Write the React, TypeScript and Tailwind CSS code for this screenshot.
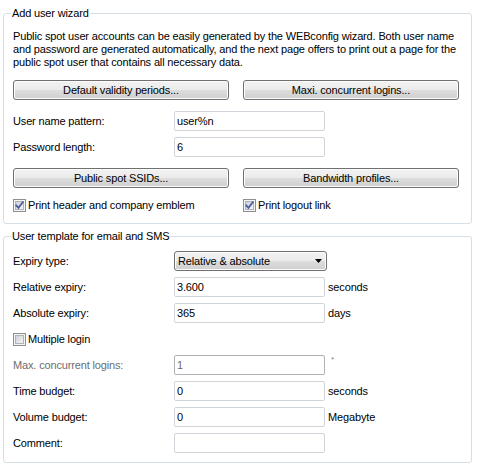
import { ReactNode } from 'react';

function PushButton({ label }: { label: string }) {
  return (
    <button
      type="button"
      className="w-[216px] h-[20px] rounded-[3px] border border-[#707070] bg-[linear-gradient(to_bottom,#f2f2f2_0%,#ebebeb_50%,#dddddd_51%,#cfcfcf_100%)] shadow-[inset_0_0_0_1px_#fcfcfc] text-center text-black leading-[18px]"
    >
      {label}
    </button>
  );
}

function CheckBox({ checked }: { checked: boolean }) {
  return (
    <svg width="13" height="13" viewBox="0 0 13 13" className="shrink-0">
      <defs>
        <linearGradient id={checked ? 'cbOn' : 'cbOff'} x1="0" y1="0" x2="1" y2="1">
          <stop offset="0" stopColor="#cbcfd5" />
          <stop offset="1" stopColor="#f6f6f6" />
        </linearGradient>
      </defs>
      <rect x="0.5" y="0.5" width="12" height="12" fill="#f4f4f4" stroke="#8e8f8f" />
      <rect x="2.5" y="2.5" width="8" height="8" fill={`url(#${checked ? 'cbOn' : 'cbOff'})`} stroke="#b0b4ba" strokeWidth="1" />
      {checked && (
        <path d="M3.2 6.4 L5.4 8.8 L9.8 3.2" fill="none" stroke="#4a5fa0" strokeWidth="1.8" strokeLinecap="square" />
      )}
    </svg>
  );
}

function CheckRow({ label, checked }: { label: string; checked: boolean }) {
  return (
    <label className="flex items-center gap-[2px] h-[13px]">
      <CheckBox checked={checked} />
      <span>{label}</span>
    </label>
  );
}

function Field({
  label,
  value,
  suffix,
  disabled,
}: {
  label: string;
  value: string;
  suffix?: ReactNode;
  disabled?: boolean;
}) {
  return (
    <div className="flex items-center h-[20px]">
      <span className={`w-[161px] shrink-0 ${disabled ? 'text-[#6d6d6d]' : ''}`}>{label}</span>
      <input
        readOnly
        disabled={disabled}
        value={value}
        className={`w-[151px] h-[20px] rounded-[2px] border bg-white px-[2px] outline-none tracking-[-0.15px] ${
          disabled ? 'border-[#adb2b5] text-[#6d6d6d]' : 'border-[#d0d5dc] text-black'
        }`}
      />
      {suffix}
    </div>
  );
}

function Group({ title, children, className }: { title: string; children: ReactNode; className?: string }) {
  return (
    <fieldset className={`w-[469px] rounded-[3px] border border-[#d5dfe5] pl-[9px] pr-[11px] ${className ?? ''}`}>
      <legend className="-ml-[2px] px-[1px] leading-[13px]">{title}</legend>
      {children}
    </fieldset>
  );
}

export default function App() {
  return (
    <div className="w-[478px] h-[471px] bg-white pl-[3px] pt-[7px] font-['Liberation_Sans',Arial,sans-serif] text-[11px] leading-[13px] tracking-[-0.15px] text-black">
      <Group title="Add user wizard" className="pt-[10px] pb-[11px]">
        <p className="whitespace-nowrap">
          Public spot user accounts can be easily generated by the WEBconfig wizard. Both user name
          <br />
          and password are generated automatically, and the next page offers to print out a page for the
          <br />
          public spot user that contains all necessary data.
        </p>
        <div className="flex gap-[14px] mt-[11px]">
          <PushButton label="Default validity periods..." />
          <PushButton label="Maxi. concurrent logins..." />
        </div>
        <div className="flex flex-col gap-[6px] mt-[11px]">
          <Field label="User name pattern:" value="user%n" />
          <Field label="Password length:" value="6" />
        </div>
        <div className="flex gap-[14px] mt-[11px]">
          <PushButton label="Public spot SSIDs..." />
          <PushButton label="Bandwidth profiles..." />
        </div>
        <div className="flex mt-[11px]">
          <div className="w-[230px]">
            <CheckRow label="Print header and company emblem" checked />
          </div>
          <CheckRow label="Print logout link" checked />
        </div>
      </Group>

      <Group title="User template for email and SMS" className="mt-[6px] pt-[8px] pb-[9px]">
        <div className="flex flex-col gap-[6px]">
          <div className="flex items-center h-[20px]">
            <span className="w-[161px] shrink-0">Expiry type:</span>
            <div className="w-[153px] h-[20px] flex items-center justify-between rounded-[3px] border border-[#707070] bg-[linear-gradient(to_bottom,#f2f2f2_0%,#ebebeb_50%,#dddddd_51%,#cfcfcf_100%)] shadow-[inset_0_0_0_1px_#fcfcfc] pl-[3px] pr-[4px]">
              <span>Relative &amp; absolute</span>
              <svg width="7" height="4" viewBox="0 0 7 4">
                <path d="M0 0 H7 L3.5 4 Z" fill="#000" />
              </svg>
            </div>
          </div>
          <Field label="Relative expiry:" value="3.600" suffix={<span className="ml-[3px]">seconds</span>} />
          <Field label="Absolute expiry:" value="365" suffix={<span className="ml-[3px]">days</span>} />
          <div className="flex items-center h-[20px]">
            <CheckRow label="Multiple login" checked={false} />
          </div>
          <Field
            label="Max. concurrent logins:"
            value="1"
            disabled
            suffix={<span className="ml-[6px] self-start mt-[1px] text-[8px] leading-[8px] text-[#8a8a8a]">*</span>}
          />
          <Field label="Time budget:" value="0" suffix={<span className="ml-[3px]">seconds</span>} />
          <Field label="Volume budget:" value="0" suffix={<span className="ml-[3px]">Megabyte</span>} />
          <Field label="Comment:" value="" />
        </div>
      </Group>
    </div>
  );
}
